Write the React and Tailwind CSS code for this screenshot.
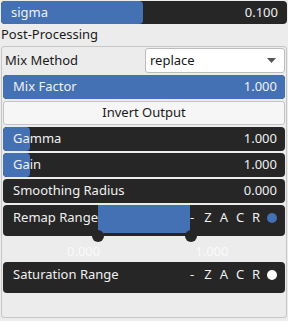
import React from 'react';

function Slider({ label, value, fill }) {
  return (
    <div className="relative flex h-[24px] items-center rounded-[4px] bg-[#262626] text-[13px] text-[#f0f0f0] overflow-hidden">
      <div className="absolute left-0 top-0 h-full rounded-[4px] bg-[#4470b4]" style={{ width: fill }} />
      <span className="relative pl-[10px]">{label}</span>
      <span className="relative ml-auto pr-[8px]">{value}</span>
    </div>
  );
}

function Flags({ dot }) {
  return (
    <div className="relative z-10 ml-auto flex items-center pr-[5px] pt-[3px] text-[13px] text-[#f0f0f0]">
      <span className="w-[16px] text-center">-</span>
      <span className="w-[16px] text-center">Z</span>
      <span className="w-[16px] text-center">A</span>
      <span className="w-[16px] text-center">C</span>
      <span className="w-[16px] text-center">R</span>
      <span className="flex w-[16px] justify-center">
        <span className={`h-[10px] w-[10px] rounded-full ${dot}`} />
      </span>
    </div>
  );
}

export default function App() {
  return (
    <div className="w-[288px] h-[321px] bg-[#ececec] px-[1px] pt-[1px] font-['Noto_Sans',sans-serif] text-[13px] text-[#1a1a1a]">
      <div className="relative flex h-[23px] items-center rounded-[4px] bg-[#262626] text-[#f0f0f0] overflow-hidden">
        <div className="absolute left-0 top-0 h-full w-[142px] rounded-[4px] bg-[#4470b4]" />
        <span className="relative pl-[10px]">sigma</span>
        <span className="relative ml-auto pr-[9px]">0.100</span>
      </div>
      <div className="flex h-[22px] items-center">Post-Processing</div>

      <div className="h-[272px] rounded-[3px] border border-[#c6c6c6] px-[1px] pt-[1px]">
        <div className="flex h-[25px] items-center">
          <span className="pl-[2px]">Mix Method</span>
          <div className="ml-auto flex h-[25px] w-[140px] items-center rounded-[3px] border border-[#bdbdbd] bg-white pl-[4px] pr-[8px]">
            <span>replace</span>
            <svg className="ml-auto" width="9" height="5" viewBox="0 0 9 5">
              <path d="M0 0 L9 0 L4.5 5 Z" fill="#555" />
            </svg>
          </div>
        </div>

        <div className="mt-[2px]">
          <Slider label="Mix Factor" value="1.000" fill="100%" />
        </div>

        <div className="mt-[2px] flex h-[24px] items-center justify-center rounded-[3px] border border-[#c4c4c4] bg-[#f6f6f6]">
          Invert Output
        </div>

        <div className="mt-[2px]">
          <Slider label="Gamma" value="1.000" fill="27px" />
        </div>
        <div className="mt-[2px]">
          <Slider label="Gain" value="1.000" fill="27px" />
        </div>
        <div className="mt-[2px]">
          <Slider label="Smoothing Radius" value="0.000" fill="0px" />
        </div>

        <div className="relative mt-[2px]">
          <div className="flex h-[31px] items-start rounded-[4px] bg-[#262626] text-[#f0f0f0]">
            <span className="pl-[10px] pt-[3px]">Remap Range</span>
            <Flags dot="bg-[#4470b4]" />
          </div>
          <div className="absolute left-[95px] top-0 h-[28px] w-[92px] bg-[#4470b4]" />
          <div className="absolute left-[89px] top-[25px] h-[12px] w-[12px] rounded-full bg-[#262626]" />
          <div className="absolute left-[182px] top-[25px] h-[12px] w-[12px] rounded-full bg-[#262626]" />
        </div>
        <div className="flex h-[26px] items-end pb-[1px] text-[13px] text-[#fafafa]">
          <span className="ml-[64px]">0.000</span>
          <span className="ml-[95px]">1.000</span>
        </div>

        <div className="flex h-[31px] items-start rounded-[4px] bg-[#262626] text-[#f0f0f0]">
          <span className="pl-[10px] pt-[3px]">Saturation Range</span>
          <Flags dot="bg-white" />
        </div>
      </div>
    </div>
  );
}
